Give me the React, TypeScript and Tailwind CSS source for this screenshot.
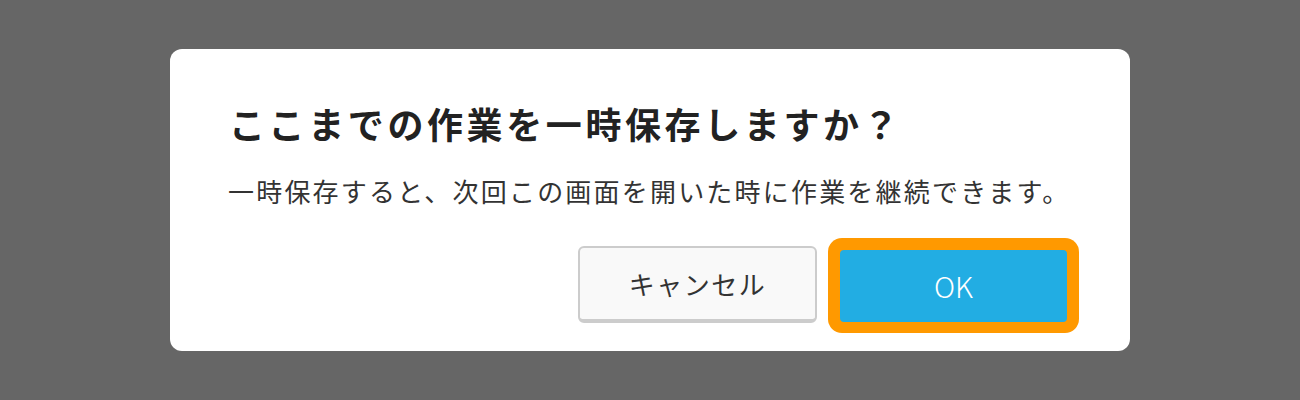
import React from "react";

export default function App() {
  return (
    <div
      className="w-[1300px] h-[400px] bg-[#666666] flex items-center justify-center"
      style={{ fontFamily: '"Noto Sans CJK JP", "Noto Sans", sans-serif' }}
    >
      <div className="w-[960px] h-[302px] bg-white rounded-[12px] flex flex-col pt-[47px] pl-[59px] pr-[51px]">
        <h1 className="text-[36px] leading-[54px] font-bold text-[#222222] tracking-[3.6px]">
          ここまでの作業を一時保存しますか？
        </h1>
        <p className="mt-[21px] text-[26px] leading-[39px] text-[#333333] tracking-[2.2px] -ml-[1px]">
          一時保存すると、次回この画面を開いた時に作業を継続できます。
        </p>
        <div className="mt-[28px] flex justify-end items-center gap-[11px]">
          <button className="w-[239px] h-[77px] mt-[-2px] bg-[#f9f9f9] border-2 border-b-[4px] border-[#cccccc] rounded-[6px] text-[26px] text-[#333333] tracking-[1.5px] flex items-center justify-center">
            キャンセル
          </button>
          <div className="w-[251px] h-[95px] bg-[#ff9900] rounded-[14px] pt-[12px] pb-[11px] px-[12px]">
            <button className="w-full h-full bg-[#22ade3] rounded-[4px] text-white text-[29px] font-light flex items-center justify-center">
              OK
            </button>
          </div>
        </div>
      </div>
    </div>
  );
}
